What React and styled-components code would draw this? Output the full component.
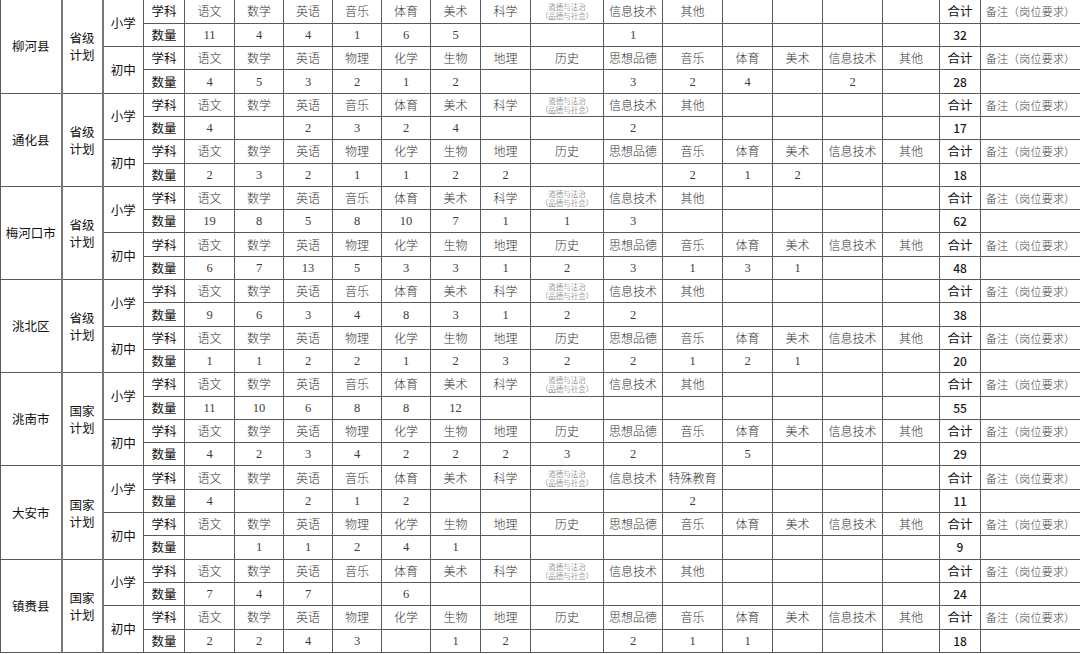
import React from "react";
import styled, { createGlobalStyle } from "styled-components";

const Global = createGlobalStyle`
  html, body { margin: 0; padding: 0; background: #fff; }
  body { width: 1080px; height: 654px; overflow: hidden; }
`;

const COLS = [61, 41, 41, 41, 50, 49, 49, 49, 49, 50, 50, 73, 59, 60, 50, 50, 60, 57, 41, 100];

const Table = styled.table`
  border-collapse: collapse;
  table-layout: fixed;
  width: 1080px;
  font-family: "Noto Sans CJK SC", "Liberation Serif", serif;
`;

const Row = styled.tr`
  height: 23.3px;
`;

const Cell = styled.td`
  border: 1px solid #5a5a5a;
  border-top: ${(p) => (p.$noTop ? "none" : "1px solid #5a5a5a")};
  padding: 0;
  text-align: center;
  vertical-align: middle;
  font-size: 12px;
  font-weight: 300;
  color: #333;
  line-height: 14px;
  white-space: nowrap;
  overflow: hidden;
`;

const Label = styled(Cell)`
  font-weight: 400;
  color: #111;
  font-size: 12.5px;
`;

const County = styled(Label)`
  font-size: 12.5px;
  border-right: 2px solid #777;
`;

const Plan = styled(Label)`
  line-height: 17px;
  border-right: 2px solid #777;
`;

const Num = styled(Cell)`
  font-family: "Liberation Serif", "Noto Sans CJK SC", serif;
  font-size: 12.5px;
  font-weight: 400;
  color: #3c3c3c;
`;

const Total = styled(Cell)`
  font-family: "Noto Sans CJK SC", "Liberation Sans", sans-serif;
  font-size: 12px;
  font-weight: 500;
  color: #1a1a1a;
`;

const Tiny = styled(Cell)`
  font-size: 7.5px;
  line-height: 9px;
  color: #555;
`;

const Note = styled(Cell)`
  font-size: 11px;
  color: #444;
  letter-spacing: 0.2px;
`;

const MORAL = "道德与法治|（品德与社会）";
const PRIMARY = ["语文", "数学", "英语", "音乐", "体育", "美术", "科学", MORAL, "信息技术", "其他", "", "", "", ""];
const MIDDLE = ["语文", "数学", "英语", "物理", "化学", "生物", "地理", "历史", "思想品德", "音乐", "体育", "美术", "信息技术", "其他"];

const e = "";
const DATA = [
  {
    name: "柳河县", plan: ["省级", "计划"],
    p: ["11", "4", "4", "1", "6", "5", e, e, "1", e, e, e, e, e], pt: "32",
    m: ["4", "5", "3", "2", "1", "2", e, e, "3", "2", "4", e, "2", e], mt: "28",
  },
  {
    name: "通化县", plan: ["省级", "计划"],
    p: ["4", e, "2", "3", "2", "4", e, e, "2", e, e, e, e, e], pt: "17",
    m: ["2", "3", "2", "1", "1", "2", "2", e, e, "2", "1", "2", e, e], mt: "18",
  },
  {
    name: "梅河口市", plan: ["省级", "计划"],
    p: ["19", "8", "5", "8", "10", "7", "1", "1", "3", e, e, e, e, e], pt: "62",
    m: ["6", "7", "13", "5", "3", "3", "1", "2", "3", "1", "3", "1", e, e], mt: "48",
  },
  {
    name: "洮北区", plan: ["省级", "计划"],
    p: ["9", "6", "3", "4", "8", "3", "1", "2", "2", e, e, e, e, e], pt: "38",
    m: ["1", "1", "2", "2", "1", "2", "3", "2", "2", "1", "2", "1", e, e], mt: "20",
  },
  {
    name: "洮南市", plan: ["国家", "计划"],
    p: ["11", "10", "6", "8", "8", "12", e, e, e, e, e, e, e, e], pt: "55",
    m: ["4", "2", "3", "4", "2", "2", "2", "3", "2", e, "5", e, e, e], mt: "29",
  },
  {
    name: "大安市", plan: ["国家", "计划"], other: "特殊教育",
    p: ["4", e, "2", "1", "2", e, e, e, e, "2", e, e, e, e], pt: "11",
    m: [e, "1", "1", "2", "4", "1", e, e, e, e, e, e, e, e], mt: "9",
  },
  {
    name: "镇赉县", plan: ["国家", "计划"],
    p: ["7", "4", "7", e, "6", e, e, e, e, e, e, e, e, e], pt: "24",
    m: ["2", "2", "4", "3", e, "1", "2", e, "2", "1", "1", e, e, e], mt: "18",
  },
];

function HeadCells({ heads, noTop }) {
  return heads.map((h, i) => {
    if (h.includes("|")) {
      const [a, b] = h.split("|");
      return (
        <Tiny key={i} $noTop={noTop}>
          {a}
          <br />
          {b}
        </Tiny>
      );
    }
    return (
      <Cell key={i} $noTop={noTop}>
        {h}
      </Cell>
    );
  });
}

function District({ d, first }) {
  const pHeads = d.other ? PRIMARY.map((h, i) => (i === 9 ? d.other : h)) : PRIMARY;
  return (
    <>
      <Row>
        <County rowSpan={4} $noTop={first}>{d.name}</County>
        <Plan rowSpan={4} $noTop={first}>
          {d.plan[0]}
          <br />
          {d.plan[1]}
        </Plan>
        <Label rowSpan={2} $noTop={first}>小学</Label>
        <Label $noTop={first}>学科</Label>
        <HeadCells heads={pHeads} noTop={first} />
        <Label $noTop={first}>合计</Label>
        <Note $noTop={first}>备注（岗位要求）</Note>
      </Row>
      <Row>
        <Label>数量</Label>
        {d.p.map((v, i) => (
          <Num key={i}>{v}</Num>
        ))}
        <Total>{d.pt}</Total>
        <Cell />
      </Row>
      <Row>
        <Label rowSpan={2}>初中</Label>
        <Label>学科</Label>
        <HeadCells heads={MIDDLE} />
        <Label>合计</Label>
        <Note>备注（岗位要求）</Note>
      </Row>
      <Row>
        <Label>数量</Label>
        {d.m.map((v, i) => (
          <Num key={i}>{v}</Num>
        ))}
        <Total>{d.mt}</Total>
        <Cell />
      </Row>
    </>
  );
}

export default function App() {
  return (
    <>
      <Global />
      <Table>
        <colgroup>
          {COLS.map((w, i) => (
            <col key={i} style={{ width: w }} />
          ))}
        </colgroup>
        <tbody>
          {DATA.map((d, i) => (
            <District key={d.name} d={d} first={i === 0} />
          ))}
        </tbody>
      </Table>
    </>
  );
}
